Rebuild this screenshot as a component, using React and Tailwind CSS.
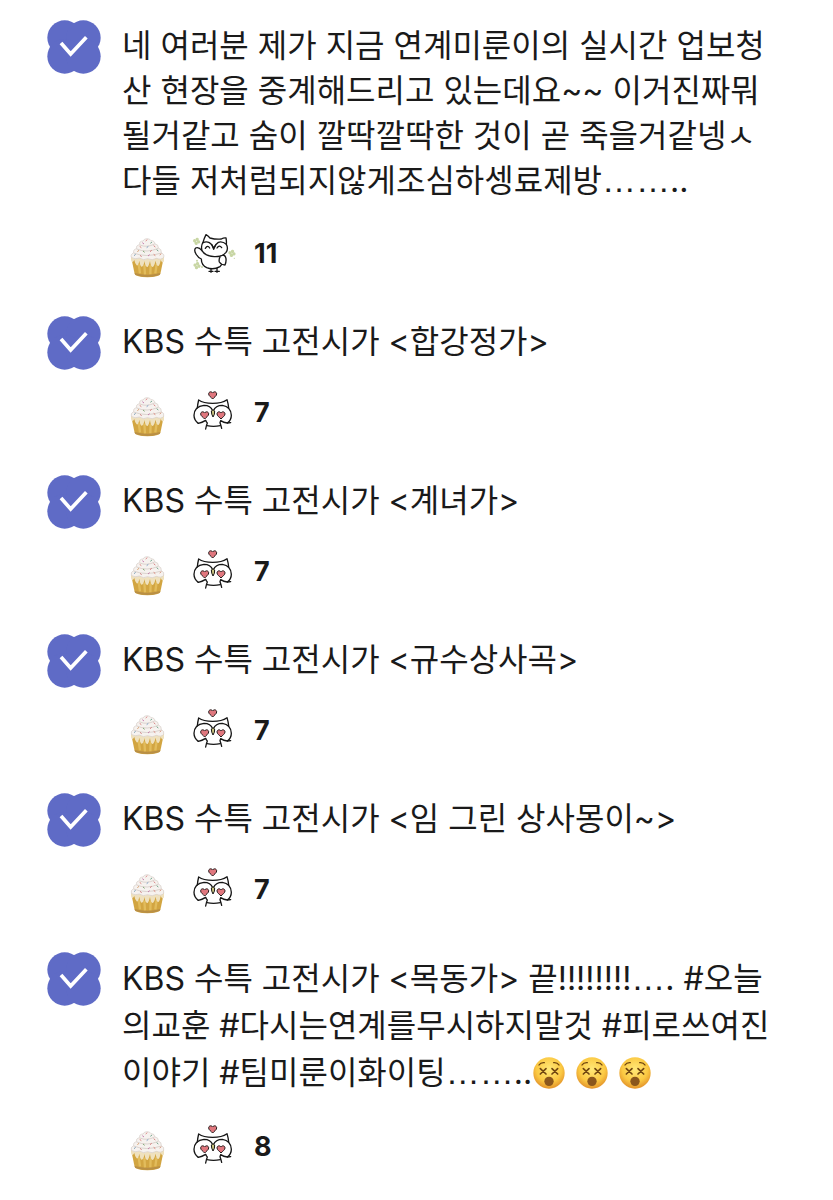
const posts = [
  {
    text: '네 여러분 제가 지금 연계미룬이의 실시간 업보청산 현장을 중계해드리고 있는데요~~ 이거진짜뭐될거같고 숨이 깔딱깔딱한 것이 곧 죽을거같넹ㅅ 다들 저처럼되지않게조심하셍료제방……..',
    owl: 'wave',
    count: 11,
    textClass: 'leading-[45px] mb-[27px]',
  },
  { text: 'KBS 수특 고전시가 <합강정가>', owl: 'love', count: 7 },
  { text: 'KBS 수특 고전시가 <계녀가>', owl: 'love', count: 7 },
  { text: 'KBS 수특 고전시가 <규수상사곡>', owl: 'love', count: 7 },
  { text: 'KBS 수특 고전시가 <임 그린 상사몽이~>', owl: 'love', count: 7 },
  {
    text: 'KBS 수특 고전시가 <목동가> 끝!!!!!!!!…. #오늘의교훈 #다시는연계를무시하지말것 #피로쓰여진이야기 #팀미룬이화이팅……..',
    dizzy: 3,
    owl: 'love',
    count: 8,
    textClass: 'leading-[47px] mb-[27px]',
  },
]

function Badge() {
  return (
    <svg viewBox="20 29 162 162" className="w-[54px] h-[54px] shrink-0" role="img" aria-label="check">
      <g fill="#5f6bc6">
        <circle cx="73" cy="82" r="52" />
        <circle cx="129" cy="82" r="52" />
        <circle cx="73" cy="138" r="52" />
        <circle cx="129" cy="138" r="52" />
      </g>
      <path d="M62 98 L91 131 L138 81" fill="none" stroke="#fff" strokeWidth="11" />
    </svg>
  )
}

const sprinkles = [
  [79, 43, '#dd8a8a'], [70, 52, '#c77fb0'], [93, 50, '#79ab94'],
  [62, 63, '#dd8079'], [82, 63, '#7d9dc4'], [104, 61, '#d47f7f'],
  [54, 75, '#d9a06f'], [72, 77, '#82a876'], [92, 75, '#d87a7a'], [113, 73, '#6ca185'],
  [44, 87, '#7d9fb5'], [63, 90, '#d07f7f'], [86, 88, '#c57dab'], [104, 87, '#d87e70'], [121, 85, '#d8977c'],
]

function Cupcake() {
  return (
    <svg viewBox="30 12 108 144" className="w-9 h-12" role="img" aria-label="cupcake">
      <path d="M34 96 L44 144 Q48 153 82 154 Q117 153 121 144 L131 96 Z" fill="#d2a541" />
      <path d="M44 141 Q82 152 121 141 L119 147 Q82 159 46 147 Z" fill="#b98f45" />
      <path
        d="M56 114 L60 142 M73 116 L75 145 M92 116 L91 145 M110 114 L106 142"
        stroke="#e2bc5c"
        strokeWidth="7"
        fill="none"
      />
      <path
        d="M33 92 L132 92 L132 106 Q127 114 122 102 Q119 120 114 120 Q109 118 107 104 Q102 123 97 123 Q92 121 90 105 Q85 125 81 123 Q75 121 74 105 Q70 123 65 122 Q60 120 58 104 Q55 120 50 118 Q45 114 43 102 Q38 112 34 106 Z"
        fill="#efe1be"
      />
      <path
        d="M82 38 Q73 37 69 45 Q57 45 59 56 Q47 58 50 68 Q39 70 41 80 Q31 84 34 94 Q44 102 58 96 Q70 105 83 98 Q97 105 109 97 Q124 103 131 94 Q134 84 124 80 Q125 69 115 66 Q116 55 105 54 Q103 43 93 44 Q90 38 82 38 Z"
        fill="#f6f2ef"
        stroke="#d5cbc5"
        strokeWidth="2"
      />
      <path
        d="M60 57 Q80 66 104 54 M50 69 Q80 82 115 67 M41 81 Q78 96 124 81"
        fill="none"
        stroke="#cdc2bc"
        strokeWidth="2"
      />
      {sprinkles.map(([x, y, color], i) => (
        <path
          key={i}
          d={i % 2 ? `M${x - 3} ${y - 2} l5 4` : `M${x - 2} ${y + 2} l5 -4`}
          stroke={color}
          strokeWidth="3"
        />
      ))}
    </svg>
  )
}

function Heart({ x, y }) {
  return (
    <path
      transform={`translate(${x} ${y})`}
      d="M0 -6 C-4 -12 -12 -10 -12 -3 C-12 3 -4 7 0 12 C4 7 12 3 12 -3 C12 -10 4 -12 0 -6 Z"
      fill="#e0777e"
      stroke="#241a1a"
      strokeWidth="3"
    />
  )
}

function LoveOwl() {
  return (
    <svg viewBox="6 3 132 144" className="w-11 h-12" role="img" aria-label="owl in love">
      <Heart x={68} y={21} />
      <g fill="none" stroke="#161616" strokeWidth="4" strokeLinecap="round" strokeLinejoin="round">
        <path d="M22 60 Q23 48 26 36 Q40 46 68 46 Q96 46 111 35 Q115 48 116 60" />
        <path d="M68 68 Q62 52 42 52 Q13 55 12 82 Q12 97 25 106" />
        <path d="M70 68 Q77 52 97 52 Q123 56 124 82 Q124 97 112 105" />
        <path d="M25 106 Q36 104 47 97 Q49 103 52 105 Q49 112 47 123" />
        <path d="M112 105 Q101 104 92 98 Q91 101 90 104 Q93 112 95 121 M112 105 L122 104" />
        <path d="M51 113 Q70 117 91 113" />
      </g>
      <path d="M64 69 Q69 62 74 69 Q75 79 69 87 Q64 79 64 69 Z" fill="#c9c37d" stroke="#161616" strokeWidth="3" />
      <Heart x={44} y={81} />
      <Heart x={93} y={81} />
    </svg>
  )
}

function Clover({ x, y }) {
  return (
    <g transform={`translate(${x} ${y}) rotate(15)`} fill="#c8d6a4">
      <circle cx="0" cy="-6" r="5" />
      <circle cx="6" cy="0" r="5" />
      <circle cx="0" cy="6" r="5" />
      <circle cx="-6" cy="0" r="5" />
    </g>
  )
}

function WaveOwl() {
  return (
    <svg viewBox="6 0 132 144" className="w-11 h-12" role="img" aria-label="waving owl">
      <Clover x={20} y={34} />
      <Clover x={21} y={107} />
      <Clover x={126} y={70} />
      <circle cx="21" cy="92" r="3" fill="#c8d6a4" />
      <circle cx="36" cy="111" r="3" fill="#c8d6a4" />
      <circle cx="133" cy="85" r="2" fill="#c8d6a4" />
      <g fill="#fff" stroke="#161616" strokeWidth="4" strokeLinecap="round" strokeLinejoin="round">
        <path d="M36 62 Q26 50 17 54 Q11 60 18 72 Q24 83 34 87 Q34 105 50 113 Q70 121 90 110 L97 101 Q101 92 96 73 Z" />
        <path d="M96 75 Q106 74 108 86 Q109 97 105 105 Q94 105 88 96 Q86 88 90 81" />
        <path d="M39 37 Q42 26 48 14 Q54 17 60 24 Q78 29 94 27 Q101 23 108 24 Q110 34 109 43 Q116 56 108 67 Q97 81 73 80 Q44 78 36 62 Q32 47 39 37 Z" />
        <path d="M39 38 Q49 33 58 38 Q67 43 71 54 Q77 42 85 37 Q97 33 109 43" fill="none" />
        <path d="M46 55 Q53 44 59 54 M81 54 Q88 43 95 53 M66 45 L71 58 L77 45" fill="none" />
        <path d="M63 116 L63 127 M81 115 L81 127 M57 124 L69 124 M75 124 L88 124" fill="none" />
      </g>
    </svg>
  )
}

function DizzyFace() {
  return (
    <svg viewBox="0 0 96 96" className="inline-block w-8 h-8 ml-px mr-2.5 align-[-5px]" role="img" aria-label="dizzy face">
      <defs>
        <radialGradient id="face" cx="50%" cy="38%" r="62%">
          <stop offset="0%" stopColor="#ffe878" />
          <stop offset="65%" stopColor="#fbc943" />
          <stop offset="100%" stopColor="#e2922a" />
        </radialGradient>
      </defs>
      <circle cx="48" cy="48" r="47" fill="url(#face)" />
      <g fill="none" stroke="#6f4510" strokeWidth="5" strokeLinecap="round">
        <path d="M22 35 L39 51 M39 35 L22 51 M57 35 L74 51 M74 35 L57 51" />
        <path d="M18 24 Q23 16 34 17 M62 17 Q73 16 78 24" strokeWidth="4" />
      </g>
      <circle cx="48" cy="73" r="14" fill="#8a561c" />
    </svg>
  )
}

// the ellipsis is set in a wider face than the rest of the line
function PostText({ text }) {
  return text.split(/(…+)/).map((part, i) =>
    part.startsWith('…') ? (
      <span key={i} className="font-['Liberation_Sans'] text-[34px]">{part}</span>
    ) : (
      part
    )
  )
}

function Post({ text, dizzy = 0, owl, count, textClass = 'leading-[45px] mb-[25px]' }) {
  return (
    <article className="flex gap-[21px]">
      <Badge />
      <div className="flex-1 min-w-0 pt-[3px]">
        <p className={`text-[32px] break-all ${textClass}`}>
          <PostText text={text} />
          {Array.from({ length: dizzy }, (_, i) => (
            <DizzyFace key={i} />
          ))}
        </p>
        <div className="flex items-center pl-2">
          <Cupcake />
          <div className="flex items-center gap-[18px] ml-[26px]">
            {owl === 'wave' ? <WaveOwl /> : <LoveOwl />}
            <span className="font-bold text-[27px] leading-8">{count}</span>
          </div>
        </div>
      </div>
    </article>
  )
}

export default function App() {
  return (
    <main className="min-h-screen bg-white text-[#1a1a1a] font-['Inter','Noto_Sans_CJK_KR',sans-serif] flex flex-col gap-[38px] pt-5 pb-7 pl-[47px] pr-14">
      {posts.map((post, i) => (
        <Post key={i} {...post} />
      ))}
    </main>
  )
}
